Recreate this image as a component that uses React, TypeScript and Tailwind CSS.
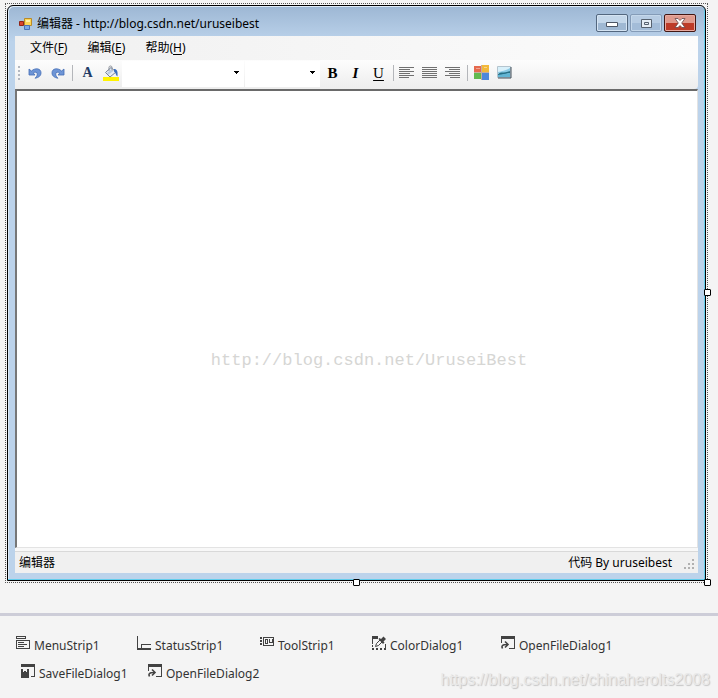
import type { ReactNode } from 'react'

const uiFont = "font-['Noto_Sans','Noto_Sans_CJK_SC',sans-serif]"

function ToolButton({ label, children }: { label: string; children: ReactNode }) {
  return (
    <button type="button" aria-label={label} className="flex h-6 w-[23px] shrink-0 items-center justify-center">
      {children}
    </button>
  )
}

function Separator({ className = 'mr-px ml-[3px]' }: { className?: string }) {
  return <span className={`h-4 w-px shrink-0 bg-[#b4b6ba] ${className}`} />
}

function Combo({ label, className }: { label: string; className: string }) {
  return (
    <span className={`relative mr-px h-6 bg-white ${className}`}>
      <select aria-label={label} className="h-full w-full appearance-none bg-white text-xs outline-none" />
      <svg className="pointer-events-none absolute top-2.5 right-1" width="7" height="4" shapeRendering="crispEdges">
        <path d="M1 0h5v1h-1v1h-1v1h-1v-1h-1v-1h-1z" fill="#000" />
      </svg>
    </span>
  )
}

function UndoIcon({ flip = false }: { flip?: boolean }) {
  return (
    <svg width="14" height="14" viewBox="0 0 14 14" className={flip ? '-scale-x-100' : ''}>
      <path d="M1 3v6h6L5.300 7C7 5.500 9.300 6 9.300 8c0 1.700-.8 2.800-2.300 4.200 3.500-.5 6-2.200 6-5.400C13 2.500 7.500 1.300 3.400 5z" fill="#6e95d6" stroke="#446db5" strokeWidth=".8" />
    </svg>
  )
}

function BucketIcon() {
  return (
    <svg width="16" height="16" viewBox="0 0 16 16">
      <path d="M0 12h16v4H0z" fill="#fff200" />
      <path d="M2.500 7.500L8 2.500l5 4.500-6 5z" fill="#e9eef6" stroke="#75839a" />
      <path d="M6 6V2.500C6 .5 9 .5 9 2.500V6" fill="none" stroke="#8a8f98" />
      <path d="M11 4c3 0 4 2 3.500 7.500-2-1-1.500-4-3.500-5z" fill="#3c6fc0" />
      <path d="M4 8l4-3.500 2 1.800-4.500 3.500z" fill="#b9cbe4" />
    </svg>
  )
}

function AlignIcon({ d }: { d: string }) {
  return (
    <svg width="15" height="12" viewBox="0 0 15 12" shapeRendering="crispEdges">
      <path d={d} stroke="#707070" fill="none" />
    </svg>
  )
}

function PaletteIcon() {
  return (
    <svg width="15" height="15" viewBox="0 0 15 15">
      <path d="M0 1h7v6H0z" fill="#e5694e" />
      <path d="M8 0h7v7H8z" fill="#f2b83a" />
      <path d="M0 8h7v6H0z" fill="#62b94e" />
      <path d="M8 8h7v7H8z" fill="#4e88dc" />
      <path d="M2 3h4v1H2zM10 2h3v1h-3z" fill="#fff" opacity=".4" />
      <path d="M7 0h1v15H7zM0 7h15v1H0z" fill="#a57e61" opacity=".6" />
    </svg>
  )
}

function PictureIcon() {
  return (
    <svg width="15" height="13" viewBox="0 0 15 13">
      <path d="M.5.5h13v11H.5z" fill="#d8f0fa" stroke="#b4c4ce" />
      <path d="M1 6c4-1 7-1 12-4v5H1z" fill="#8ccbe6" />
      <path d="M1 8c3-3 5 0 12-3v2L1 10z" fill="#267087" />
      <path d="M1 9l12-2v4H1z" fill="#62b5d4" />
      <path d="M14 1v11H1" stroke="#44515b" fill="none" />
    </svg>
  )
}

function FormIcon() {
  return (
    <svg width="13" height="13" viewBox="0 0 13 13">
      <path d="M.5 4.500h4v4h-4z" fill="#d8432d" stroke="#8f2417" />
      <path d="M5.500 1.500h7v7h-7z" fill="#fbd557" stroke="#b98a28" />
      <path d="M5.500 8.500h5v4h-5z" fill="#7ca9e8" stroke="#4a72b4" />
      <path d="M7 3h4v2H7z" fill="#fff0a8" />
    </svg>
  )
}

function MenuStripIcon() {
  return (
    <svg width="14" height="14" viewBox="0 0 14 14" fill="none" stroke="#424242" shapeRendering="crispEdges" className="shrink-0">
      <path d="M.5.5h9v2h-9zM.5 4.500h13v8h-13zM2 6.500h6M2 8.500h9M2 10.500h6" />
    </svg>
  )
}

function StatusStripIcon() {
  return (
    <svg width="14" height="14" viewBox="0 0 14 14" fill="#424242" shapeRendering="crispEdges" className="shrink-0">
      <path d="M0 0h1v14H0zM0 12h14v2H0zM4 8h1v5H4zM4 8h10v1H4z" />
    </svg>
  )
}

function ToolStripIcon() {
  return (
    <svg width="14" height="14" viewBox="0 0 14 14" fill="none" stroke="#424242" shapeRendering="crispEdges" className="shrink-0">
      <path d="M3 1.500h11M3 9.500h11M3.500 1v9M13.500 1v9M5.500 3.500h2v4h-2zM9.500 3v4M12 3v4M10 6.500h2" />
      <path d="M1 1v9" strokeWidth="2" strokeDasharray="2 1" />
    </svg>
  )
}

function ColorDialogIcon() {
  return (
    <svg width="14" height="14" viewBox="0 0 14 14" fill="#424242" className="shrink-0">
      <path d="M0 0h6v3H1v5H0zM0 9h1v2H0zM0 12h2v2H0zM4 12h2v2H4zM8 12h2v2H8zM12 12h2v2h-2zM13 8h1v5h-1z" />
      <path d="M3.500 10.500l1-3 3.500-3.500 2 2-3.500 3.500z" fill="#f4f4f4" stroke="#424242" />
      <path d="M6.500 3l1-1 1.500 1L11.500.5 14 3l-2.500 2.500 1 1L11 8z" />
    </svg>
  )
}

function OpenDialogIcon() {
  return (
    <svg width="14" height="14" viewBox="0 0 14 14" fill="#424242" className="shrink-0">
      <path d="M0 0h14v3H0zM13 3h1v10H8v-1h5zM0 3h1v4H0z" />
      <path d="M1.500 12.500C0 9.500 2 8.300 6 8.500M4 5.500l3 3-3 3" fill="none" stroke="#424242" strokeWidth="1.600" />
    </svg>
  )
}

function SaveDialogIcon() {
  return (
    <svg width="14" height="14" viewBox="0 0 14 14" fill="#424242" shapeRendering="crispEdges" className="shrink-0">
      <path d="M0 0h14v3H0zM13 3h1v10h-4v-1h3zM0 5h8v9H0z" />
      <path d="M2 5h1v3H2zM5 5h1v3H5zM3 5h2v2H3z" fill="#f4f4f4" />
    </svg>
  )
}

function TrayItem({ icon, name, className }: { icon: ReactNode; name: string; className: string }) {
  return (
    <button type="button" className={`flex shrink-0 gap-1 text-left text-xs leading-5 text-[#333] ${className}`}>
      {icon}
      <span>{name}</span>
    </button>
  )
}

function Handle({ className }: { className: string }) {
  return <span className={`absolute size-[7px] rounded-[1px] border border-black bg-white ${className}`} />
}

const menus = [
  { text: '文件', hotkey: 'F' },
  { text: '编辑', hotkey: 'E' },
  { text: '帮助', hotkey: 'H' },
]

export default function App() {
  return (
    <div className={`relative min-h-screen overflow-hidden bg-[#f4f4f4] pt-[3px] text-black ${uiFont}`}>
      <div className="relative mr-2.5 ml-[5px] border border-dotted border-[#555] p-px">
        <div className="rounded-t-md border border-black bg-[#b9d1ea] bg-linear-to-b from-[#9db7d4] to-[#bcd3eb] to-[36px] px-[7px] pb-[7px] shadow-[inset_-1px_-1px_0_#62cdec,inset_1px_1px_0_#dceaf7]">
          <header className="flex h-[30px] items-center pt-1 pl-1">
            <FormIcon />
            <h1 className="ml-[5px] grow pt-0.5 text-xs leading-5">编辑器 - http://blog.csdn.net/uruseibest</h1>
            <div className="mr-0.5 flex gap-[2px]">
              <button type="button" aria-label="最小化" className="flex h-[18px] w-8 items-center justify-center rounded-[2px] border border-[#53677f] bg-linear-to-b from-[#c4d7ea] from-50% to-[#9fb8d3] to-50% shadow-[inset_0_0_0_1px_#d5e4f3]">
                <svg width="12" height="8"><path d="M.5 3.500h11v4H.5z" fill="#fff" stroke="#4d5665" /></svg>
              </button>
              <button type="button" aria-label="最大化" className="flex h-[18px] w-8 items-center justify-center rounded-[2px] border border-[#849bb7] bg-linear-to-b from-[#b7cce3] from-50% to-[#a3bcd8] to-50% shadow-[inset_0_0_0_1px_#c5d8eb]">
                <svg width="11" height="9"><path d="M.5.5h10v8H.5zM3.500 3.500h4v2h-4z" fill="#e5edf5" stroke="#56616f" /></svg>
              </button>
              <button type="button" aria-label="关闭" className="flex h-[18px] w-8 items-center justify-center rounded-[2px] border border-[#421713] bg-linear-to-b from-[#df9a8d] from-50% to-[#bd3b28] to-50% shadow-[inset_0_0_0_1px_#e8aaa0]">
                <svg width="12" height="10" viewBox="0 0 12 10">
                  <path d="M1 .5h3l2 2 2-2h3L7.700 5 11 9.500H8l-2-2-2 2H1L4.300 5z" fill="#fff" stroke="#66474b" strokeWidth=".8" />
                </svg>
              </button>
            </div>
          </header>

          <nav className="flex h-6 items-center bg-linear-to-r from-[#f0f0f0] to-[#fcfcfc] pl-[15px] text-xs leading-5">
            {menus.map((m) => (
              <button key={m.text} type="button" className="mr-5 h-6">
                {m.text}(<u className="underline-offset-2">{m.hotkey}</u>)
              </button>
            ))}
          </nav>

          <div role="toolbar" aria-label="格式" className="flex h-[29px] items-center rounded-br-sm bg-linear-to-b from-[#fdfdfd] to-[#ededed] pb-1">
            <svg width="8" height="16" className="shrink-0" shapeRendering="crispEdges">
              <path d="M4 1v14" stroke="#b4b8c0" strokeWidth="2" strokeDasharray="2 2" />
            </svg>
            <ToolButton label="撤消"><UndoIcon /></ToolButton>
            <ToolButton label="恢复"><UndoIcon flip /></ToolButton>
            <Separator className="mx-[3px]" />
            <ToolButton label="字体">
              <span className="font-['Liberation_Serif',serif] text-sm leading-4 font-bold text-[#223b66]">A</span>
            </ToolButton>
            <ToolButton label="填充颜色"><BucketIcon /></ToolButton>
            <Combo label="字体名称" className="w-[122px]" />
            <Combo label="字号" className="w-[75px]" />
            <ToolButton label="加粗">
              <b className="font-['Liberation_Serif',serif] text-[15px] leading-4">B</b>
            </ToolButton>
            <ToolButton label="倾斜">
              <i className="font-['Liberation_Serif',serif] text-[15px] leading-4 font-bold">I</i>
            </ToolButton>
            <ToolButton label="下划线">
              <u className="font-['Liberation_Serif',serif] text-[15px] leading-4 underline-offset-2">U</u>
            </ToolButton>
            <Separator />
            <ToolButton label="左对齐"><AlignIcon d="M0 .5h15M0 2.500h11M0 4.500h15M0 6.500h11M0 8.500h15M0 10.500h10" /></ToolButton>
            <ToolButton label="居中"><AlignIcon d="M0 .5h15M0 2.500h15M0 4.500h15M0 6.500h15M0 8.500h15M0 10.500h15" /></ToolButton>
            <ToolButton label="右对齐"><AlignIcon d="M0 .5h15M4 2.500h11M0 4.500h15M4 6.500h11M0 8.500h15M5 10.500h10" /></ToolButton>
            <Separator className="mr-0.5 ml-[3px]" />
            <ToolButton label="颜色"><PaletteIcon /></ToolButton>
            <ToolButton label="插入图片"><PictureIcon /></ToolButton>
          </div>

          <div className="relative border-t-2 border-r border-b border-l-2 border-t-[#6a6a6a] border-r-[#e3e3e3] border-b-[#e3e3e3] border-l-[#777] bg-white">
            <textarea aria-label="正文" className="block h-[456px] w-full resize-none bg-white outline-none" />
            <p className="pointer-events-none absolute inset-x-0 top-[258px] pl-6 text-center font-['Liberation_Mono',monospace] text-[17px] leading-6 text-[#d6d6d4]">
              http://blog.csdn.net/UruseiBest
            </p>
          </div>

          <footer className="border-t-[3px] border-[#f8f8f8] bg-[#f0f0f0]">
            <div className="flex h-[22px] items-center border-t border-[#d9d9d9] pr-0.5 pl-1 text-xs leading-5">
              <span className="grow">编辑器</span>
              <span className="mr-3">代码 By uruseibest</span>
              <svg width="12" height="12" className="mt-1" fill="#b0b0b0" shapeRendering="crispEdges">
                <path d="M8 0h2v2H8zM4 4h2v2H4zM8 4h2v2H8zM0 8h2v2H0zM4 8h2v2H4zM8 8h2v2H8z" />
              </svg>
            </div>
          </footer>
        </div>
        <Handle className="top-1/2 -right-1 -translate-y-1" />
        <Handle className="-bottom-1 left-1/2 -translate-x-1" />
        <Handle className="-right-1 -bottom-1" />
      </div>

      <section className="mt-[30px] border-t-[3px] border-[#cdcdd8] pt-5">
        <div className="flex pl-4">
          <TrayItem icon={<MenuStripIcon />} name="MenuStrip1" className="w-[121px]" />
          <TrayItem icon={<StatusStripIcon />} name="StatusStrip1" className="w-[123px]" />
          <TrayItem icon={<ToolStripIcon />} name="ToolStrip1" className="w-28" />
          <TrayItem icon={<ColorDialogIcon />} name="ColorDialog1" className="w-[129px]" />
          <TrayItem icon={<OpenDialogIcon />} name="OpenFileDialog1" className="w-32" />
        </div>
        <div className="mt-2 flex pl-[21px]">
          <TrayItem icon={<SaveDialogIcon />} name="SaveFileDialog1" className="w-[127px]" />
          <TrayItem icon={<OpenDialogIcon />} name="OpenFileDialog2" className="w-32" />
        </div>
      </section>
      <p className="absolute right-2 bottom-1.5 font-['Liberation_Sans',sans-serif] text-base leading-6 text-[#e9e9e9] [text-shadow:1px_1px_1px_#c4c4c4]">
        https://blog.csdn.net/chinaherolts2008
      </p>
    </div>
  )
}
